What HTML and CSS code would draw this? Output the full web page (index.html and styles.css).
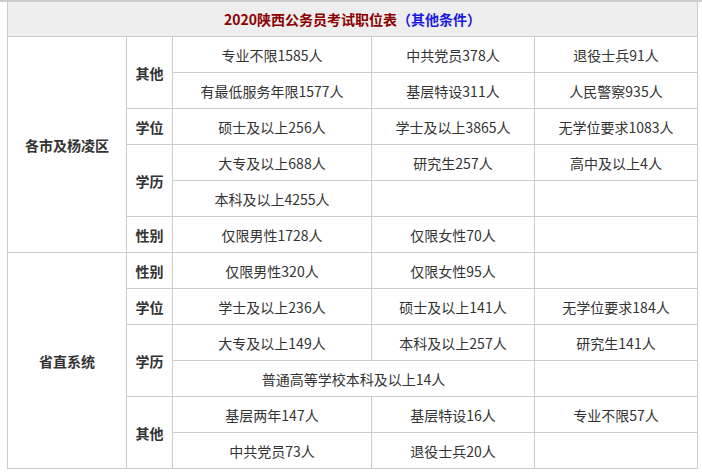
FILE: index.html
```html
<!DOCTYPE html>
<html lang="zh-CN">
<head>
<meta charset="utf-8">
<link rel="stylesheet" href="styles.css">
</head>
<body>
<div class="topbar"></div>
<table class="jobs">
  <colgroup>
    <col class="c1"><col class="c2"><col class="c3"><col class="c4"><col class="c5">
  </colgroup>
  <tr class="head">
    <td colspan="5"><span class="title">2020陕西公务员考试职位表</span><span class="sub">（其他条件）</span></td>
  </tr>
  <tr>
    <td rowspan="6" class="region">各市及杨凌区</td>
    <td rowspan="2" class="label">其他</td>
    <td>专业不限1585人</td><td>中共党员378人</td><td>退役士兵91人</td>
  </tr>
  <tr><td>有最低服务年限1577人</td><td>基层特设311人</td><td>人民警察935人</td></tr>
  <tr><td class="label">学位</td><td>硕士及以上256人</td><td>学士及以上3865人</td><td>无学位要求1083人</td></tr>
  <tr><td rowspan="2" class="label">学历</td><td>大专及以上688人</td><td>研究生257人</td><td>高中及以上4人</td></tr>
  <tr><td>本科及以上4255人</td><td></td><td></td></tr>
  <tr><td class="label">性别</td><td>仅限男性1728人</td><td>仅限女性70人</td><td></td></tr>
  <tr>
    <td rowspan="6" class="region">省直系统</td>
    <td class="label">性别</td>
    <td>仅限男性320人</td><td>仅限女性95人</td><td></td>
  </tr>
  <tr><td class="label">学位</td><td>学士及以上236人</td><td>硕士及以上141人</td><td>无学位要求184人</td></tr>
  <tr><td rowspan="2" class="label">学历</td><td>大专及以上149人</td><td>本科及以上257人</td><td>研究生141人</td></tr>
  <tr><td colspan="2">普通高等学校本科及以上14人</td><td></td></tr>
  <tr><td rowspan="2" class="label">其他</td><td>基层两年147人</td><td>基层特设16人</td><td>专业不限57人</td></tr>
  <tr><td>中共党员73人</td><td>退役士兵20人</td><td></td></tr>
</table>
</body>
</html>
```
FILE: styles.css
```css
html, body {
  margin: 0;
  padding: 0;
  background: #fff;
}
body {
  font-family: "Microsoft YaHei", "Noto Sans CJK SC", "Noto Sans", sans-serif;
  font-size: 14px;
  color: #333;
}
.topbar {
  height: 2px;
  background: #cccccc;
}
.jobs {
  margin-left: 7px;
  width: 690px;
  table-layout: fixed;
  border-collapse: collapse;
}
.c1 { width: 119px; }
.c2 { width: 46px; }
.c3 { width: 199px; }
.c4 { width: 163px; }
.c5 { width: 163px; }
.jobs td {
  border: 1px solid #cccccc;
  border-top: 0;
  height: 35px;
  padding: 0;
  text-align: center;
  vertical-align: middle;
  white-space: nowrap;
  line-height: 20px;
}
.jobs tr + tr td {
  border-top: 1px solid #cccccc;
}
.jobs .head td {
  height: 34px;
  background: #eeeeee;
  font-weight: bold;
}
.title { color: #8b0000; }
.sub { color: #1a1ae0; }
.label, .region {
  font-weight: bold;
}
```
